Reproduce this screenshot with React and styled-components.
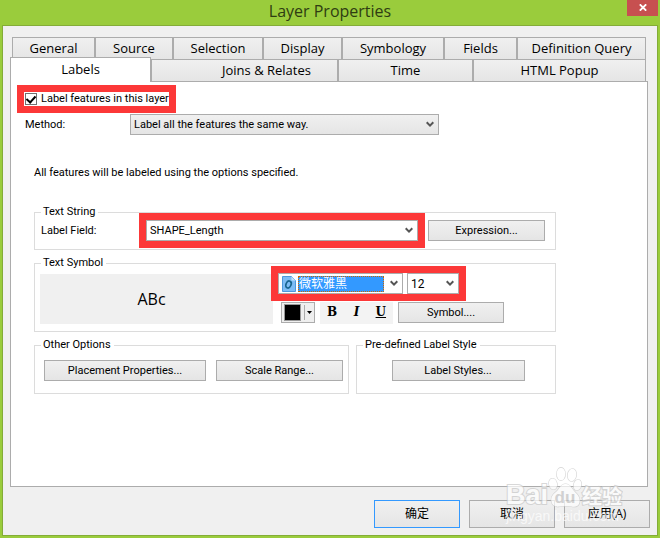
import styled, { createGlobalStyle } from "styled-components";

const TABS_BACK = [
  { name: "General", share: 83 },
  { name: "Source", share: 78 },
  { name: "Selection", share: 90 },
  { name: "Display", share: 79 },
  { name: "Symbology", share: 102 },
  { name: "Fields", share: 73 },
  { name: "Definition Query", share: 129 },
];

const TABS_FRONT = [
  { name: "Labels", share: 139, active: true },
  { name: "Joins & Relates", share: 187, indent: 44 },
  { name: "Time", share: 135 },
  { name: "HTML Popup", share: 173 },
];

const Chevron = () => (
  <ChevronIcon viewBox="0 0 8 7" aria-hidden="true">
    <path d="M0.7 1.2 L4 4.6 L7.3 1.2" />
  </ChevronIcon>
);

const OpenTypeIcon = () => (
  <svg width="14" height="16" viewBox="0 0 14 16" aria-hidden="true">
    <path d="M.5.5h9l4 4v11H.5z" fill="#7dbcf5" stroke="#4c97dc" />
    <path d="M9.5.5v4h4z" fill="#c4e2fb" />
    <ellipse
      cx="6.5"
      cy="8.5"
      rx="2.5"
      ry="3.6"
      transform="rotate(24 6.5 8.5)"
      fill="none"
      stroke="#17648f"
      strokeWidth="1.7"
    />
  </svg>
);

const TabRow = ({ tabs }) => (
  <TabList
    role="tablist"
    $columns={tabs.map((tab) => `minmax(0, ${tab.share}fr)`).join(" ")}
  >
    {tabs.map((tab) => (
      <Tab
        key={tab.name}
        role="tab"
        aria-selected={!!tab.active}
        $indent={tab.indent}
        $active={tab.active}
      >
        {tab.name}
      </Tab>
    ))}
  </TabList>
);

const BaiduMark = () => (
  <Watermark aria-hidden="true">
    <WatermarkLogo>
      <WatermarkLatin>Bai</WatermarkLatin>
      <svg width="34" height="42" viewBox="0 0 34 42">
        <g fill="#fff" stroke="#c4c4c4" strokeWidth="1.2">
          <ellipse cx="5" cy="18" rx="4" ry="5.5" transform="rotate(-12 5 18)" />
          <ellipse cx="13" cy="8" rx="4.3" ry="6.3" />
          <ellipse cx="24" cy="9" rx="4.3" ry="6.2" transform="rotate(8 24 9)" />
          <ellipse cx="29.5" cy="19" rx="3.8" ry="5.3" transform="rotate(14 29.5 19)" />
          <path d="M17.5 18c-5 0-6 5-9 7.5-4 3-6 6-5 10 1 5 5 5.5 8 5 4-.8 8-.8 12 0 4 .8 7 0 8-4 1-5-2-8-5-11-3-3-4-7.5-9-7.5z" />
        </g>
        <text
          x="17"
          y="37"
          textAnchor="middle"
          fontFamily="Liberation Sans, sans-serif"
          fontSize="17"
          fontWeight="bold"
          fill="#c4c4c4"
        >
          du
        </text>
      </svg>
      <WatermarkHan>经验</WatermarkHan>
    </WatermarkLogo>
    <WatermarkUrl>jingyan.baidu.com</WatermarkUrl>
  </Watermark>
);

export default function App() {
  return (
    <>
      <GlobalStyle />
      <Dialog>
        <TitleBar>
          <Title>Layer Properties</Title>
          <CloseButton aria-label="Close">
            <svg width="8" height="7" viewBox="0 0 8 7">
              <path d="M.8.3 7.2 6.7M7.2.3.8 6.7" stroke="#fff" strokeWidth="1.8" />
            </svg>
          </CloseButton>
        </TitleBar>

        <Body>
          <TabRow tabs={TABS_BACK} />
          <TabRow tabs={TABS_FRONT} />

          <Panel role="tabpanel">
            <Marked>
              <CheckLabel>
                <Checkbox type="checkbox" defaultChecked />
                Label features in this layer
              </CheckLabel>
            </Marked>

            <MethodRow>
              <MethodLabel htmlFor="method">Method:</MethodLabel>
              <SelectFrame $width="309px" $shaded>
                <Select id="method">
                  <option>Label all the features the same way.</option>
                </Select>
                <Chevron />
              </SelectFrame>
            </MethodRow>

            <Options>
              <Note>All features will be labeled using the options specified.</Note>

              <Group>
                <Legend>Text String</Legend>
                <FieldRow>
                  <FieldLabel htmlFor="field">Label Field:</FieldLabel>
                  <Marked $fill>
                    <SelectFrame>
                      <Select id="field">
                        <option>SHAPE_Length</option>
                      </Select>
                      <Chevron />
                    </SelectFrame>
                  </Marked>
                  <Button $width="117px">Expression...</Button>
                </FieldRow>
              </Group>

              <Group>
                <Legend>Text Symbol</Legend>
                <SymbolRow>
                  <Preview>ABc</Preview>
                  <SymbolControls>
                    <Marked>
                      <FontRow>
                        <SelectFrame $width="125px" $icon>
                          <OpenTypeIcon />
                          <Select aria-label="Font" $picked>
                            <option>微软雅黑</option>
                          </Select>
                          <Chevron />
                        </SelectFrame>
                        <SelectFrame $width="52px">
                          <Select aria-label="Size" $large>
                            <option>12</option>
                          </Select>
                          <Chevron />
                        </SelectFrame>
                      </FontRow>
                    </Marked>
                    <FormatRow>
                      <ColorButton aria-label="Text color">
                        <Swatch />
                        <svg width="5" height="3" viewBox="0 0 5 3">
                          <path d="M0 0h5L2.5 3z" />
                        </svg>
                      </ColorButton>
                      <StyleBar>
                        <StyleButton>B</StyleButton>
                        <StyleButton $italic>I</StyleButton>
                        <StyleButton $underline>U</StyleButton>
                      </StyleBar>
                      <Button $width="106px">Symbol....</Button>
                    </FormatRow>
                  </SymbolControls>
                </SymbolRow>
              </Group>

              <GroupPair>
                <Group>
                  <Legend>Other Options</Legend>
                  <ButtonRow>
                    <Button $width="162px">Placement Properties...</Button>
                    <Button $width="127px">Scale Range...</Button>
                  </ButtonRow>
                </Group>
                <Group>
                  <Legend>Pre-defined Label Style</Legend>
                  <ButtonRow>
                    <Button $width="133px">Label Styles...</Button>
                  </ButtonRow>
                </Group>
              </GroupPair>
            </Options>
          </Panel>

          <Footer>
            <FooterButton $primary>确定</FooterButton>
            <FooterButton>取消</FooterButton>
            <FooterButton>应用(A)</FooterButton>
          </Footer>
        </Body>
        <BaiduMark />
      </Dialog>
    </>
  );
}

const GlobalStyle = createGlobalStyle`
  * {
    box-sizing: border-box;
  }

  body {
    margin: 0;
    color: #000;
    font: 11px/14px Roboto, "Noto Sans CJK SC", sans-serif;
  }

  button, select, input {
    font: inherit;
    color: inherit;
    margin: 0;
  }
`;

const Dialog = styled.div`
  position: relative;
  display: flex;
  flex-direction: column;
  min-height: 100vh;
  padding: 0 2px 2px;
  background: #9acc3c;
`;

const TitleBar = styled.header`
  display: grid;
  grid-template-columns: 1fr auto 1fr;
  height: 25px;
`;

const Title = styled.h1`
  grid-column: 2;
  margin: 0;
  color: #2f3d12;
  font: 16px/22px "Open Sans", sans-serif;
`;

const CloseButton = styled.button`
  display: flex;
  align-items: center;
  justify-content: center;
  justify-self: end;
  width: 31px;
  height: 16px;
  padding: 0 0 2px;
  border: 0;
  background: #c75050;
`;

const Body = styled.main`
  display: flex;
  flex: 1;
  flex-direction: column;
  padding: 11px 9px 7px 7px;
  border: 1px solid #84ac38;
  background: #f0f0f0;
`;

const TabList = styled.div`
  display: grid;
  grid-template-columns: ${({ $columns }) => $columns};
  height: 22px;
  margin: 0 2px;
`;

const Tab = styled.button`
  padding: 0 0 2px ${({ $indent }) => $indent || 0}px;
  border: 1px solid #acacac;
  border-bottom: 0;
  background: linear-gradient(#f0f0f0, #e5e5e5);
  font: 13px/18px "Open Sans", sans-serif;
  white-space: nowrap;

  ${({ $active }) =>
    $active &&
    `
    z-index: 1;
    margin: -2px 0 -1px -2px;
    background: #fff;
  `}
`;

const Panel = styled.section`
  flex: 1;
  padding: 10px 13px;
  border: 1px solid #acacac;
  background: #fff;
`;

const Marked = styled.div`
  position: relative;
  width: fit-content;
  ${({ $fill }) => $fill && "flex: 1;"}

  &::after {
    content: "";
    position: absolute;
    inset: -7px;
    border: 7px solid #fc3838;
    pointer-events: none;
  }
`;

const CheckLabel = styled.label`
  display: flex;
  align-items: center;
  gap: 4px;
  padding-left: 1px;
  white-space: nowrap;
`;

const Checkbox = styled.input`
  appearance: none;
  width: 12px;
  height: 12px;
  border: 1px solid #707070;
  background: #fff;

  &:checked::before {
    content: "";
    display: block;
    width: 4px;
    height: 7px;
    margin: 0 auto;
    border: solid #000;
    border-width: 0 2px 2px 0;
    transform: rotate(42deg);
  }
`;

const MethodRow = styled.div`
  display: flex;
  align-items: center;
  margin-top: 8px;
`;

const MethodLabel = styled.label`
  width: 106px;
  padding-left: 1px;
`;

const SelectFrame = styled.div`
  display: flex;
  align-items: center;
  width: ${({ $width }) => $width || "auto"};
  height: 21px;
  padding: 0 4px 0 ${({ $icon }) => ($icon ? 3 : 0)}px;
  gap: ${({ $icon }) => ($icon ? 2 : 0)}px;
  border: 1px solid #acacac;
  background: ${({ $shaded }) =>
    $shaded ? "linear-gradient(#f0f0f0, #e5e5e5)" : "#fff"};

  & > svg {
    flex: none;
  }
`;

const Select = styled.select`
  appearance: none;
  flex: 1;
  min-width: 0;
  height: 100%;
  padding: 0 3px;
  border: 0;
  border-radius: 0;
  background: transparent;
  ${({ $large }) => $large && "font-size: 12px;"}

  ${({ $picked }) =>
    $picked &&
    `
    height: 16px;
    margin-right: 4px;
    padding: 0;
    border: 1px dotted #cc6600;
    background: #3399ff;
    color: #fff;
    font-size: 12px;
    line-height: 14px;
  `}
`;

const ChevronIcon = styled.svg`
  width: 8px;
  height: 7px;
  fill: none;
  stroke: #555;
  stroke-width: 2;
`;

const Options = styled.div`
  padding: 0 78px 0 10px;
`;

const Note = styled.p`
  margin: 31px 0 25px;
`;

const Group = styled.fieldset`
  min-width: 0;
  margin: 0 0 6px;
  padding: 0 5px 7px;
  border: 1px solid #dcdcdc;
`;

const Legend = styled.legend`
  margin-left: 1px;
  padding: 0 3px 0 2px;
`;

const FieldRow = styled.div`
  display: flex;
  align-items: center;
  gap: 10px;
  padding: 1px 5px 1px 0;
`;

const FieldLabel = styled.label`
  width: 96px;
  padding-left: 1px;
`;

const Button = styled.button`
  flex: none;
  width: ${({ $width }) => $width};
  height: 21px;
  padding: 0;
  border: 1px solid #acacac;
  background: linear-gradient(#f0f0f0, #e5e5e5);
`;

const SymbolRow = styled.div`
  display: flex;
  align-items: flex-end;
  gap: 5px;
  padding: 3px 46px 0 0;
`;

const Preview = styled.div`
  flex: 1;
  height: 50px;
  padding-right: 10px;
  background: #f0f0f0;
  font: 16px/50px "Open Sans", sans-serif;
  text-align: center;
`;

const SymbolControls = styled.div`
  display: flex;
  flex: none;
  flex-direction: column;
  gap: 8px;
`;

const FontRow = styled.div`
  display: flex;
  gap: 4px;
`;

const FormatRow = styled.div`
  display: flex;
  gap: 5px;
  height: 22px;
  padding-left: 3px;
`;

const ColorButton = styled.button`
  display: flex;
  align-items: center;
  justify-content: space-between;
  width: 34px;
  height: 21px;
  padding: 0 2px;
  border: 1px solid #acacac;
  background: linear-gradient(#acacac, #acacac) 22px 50% / 1px 15px no-repeat
    #efefef;
`;

const Swatch = styled.span`
  width: 17px;
  height: 17px;
  border: 1px solid #999;
  background: #000;
`;

const StyleBar = styled.div`
  display: flex;
  width: 73px;
  background: #f3f3f3;
`;

const StyleButton = styled.button`
  flex: 1;
  height: 20px;
  padding: 0;
  border: 0;
  background: transparent;
  font: bold 12px/20px "DejaVu Serif", serif;
  font-style: ${({ $italic }) => ($italic ? "italic" : "normal")};
  text-decoration: ${({ $underline }) => ($underline ? "underline" : "none")};
`;

const GroupPair = styled.div`
  display: grid;
  grid-template-columns: 315fr 200fr;
  gap: 7px;
`;

const ButtonRow = styled.div`
  display: flex;
  justify-content: center;
  gap: 10px;
  padding: 8px 0 5px 4px;
`;

const Footer = styled.footer`
  display: flex;
  justify-content: flex-end;
  gap: 9px;
  margin: 13px -2px 0 0;
`;

const FooterButton = styled.button`
  width: 86px;
  height: 28px;
  padding: 0;
  border: 1px solid ${({ $primary }) => ($primary ? "#3399ff" : "#acacac")};
  background: linear-gradient(#f0f0f0, #e5e5e5);
  font: 12px/24px "Open Sans", "Noto Sans CJK SC", sans-serif;
`;

const Watermark = styled.div`
  position: absolute;
  right: 34px;
  bottom: 14px;
  width: 120px;
  color: #fff;
  opacity: 0.7;
  pointer-events: none;
`;

const WatermarkLogo = styled.div`
  display: flex;
  align-items: flex-end;
  -webkit-text-stroke: 2px #c8c8c8;
  paint-order: stroke fill;

  & > svg {
    flex: none;
    -webkit-text-stroke: 0;
  }
`;

const WatermarkLatin = styled.span`
  width: 42px;
  font: bold 27px/26px "Liberation Sans", sans-serif;
`;

const WatermarkHan = styled.span`
  font: bold 20px/24px "Noto Sans CJK SC", sans-serif;
  white-space: nowrap;
`;

const WatermarkUrl = styled.div`
  font: 14px/16px "Liberation Sans", sans-serif;
`;
